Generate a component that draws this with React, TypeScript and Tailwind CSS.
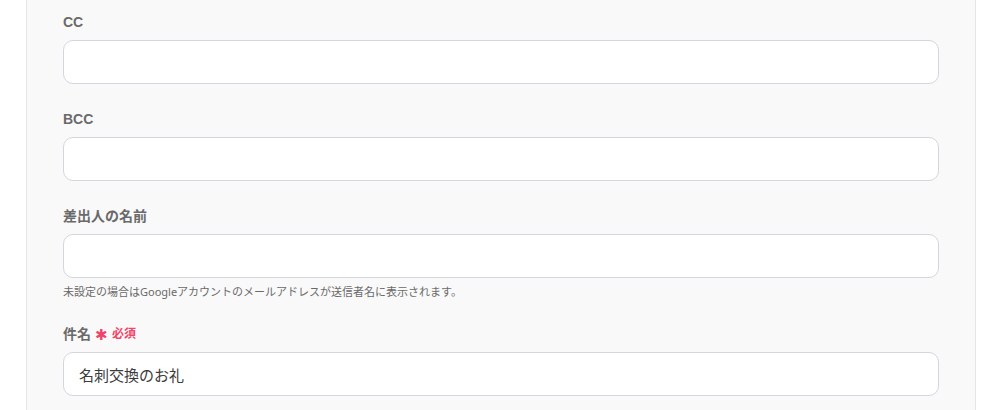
import React from 'react';

const font = { fontFamily: 'Roboto, "Noto Sans CJK JP", sans-serif' };
const labelFont = { fontFamily: '"Liberation Sans", "Noto Sans CJK JP", sans-serif' };
const helpFont = { fontFamily: '"Noto Sans", "Noto Sans CJK JP", sans-serif' };

type FieldProps = {
  label: string;
  required?: boolean;
  value?: string;
  help?: string;
};

const Field: React.FC<FieldProps> = ({ label, required, value = '', help }) => (
  <div className="flex flex-col">
    <div className="flex h-5 items-center gap-1 mb-2" style={labelFont}>
      <span className="text-[14px] font-bold text-[#6a6a6a]">{label}</span>
      {required && (
        <span className="flex items-center gap-1 text-[#f0456a]">
          <span className="text-[15px] leading-none">✱</span>
          <span className="text-[12px] font-bold">必須</span>
        </span>
      )}
    </div>
    <input
      readOnly
      value={value}
      className="h-11 w-full rounded-[10px] border border-[#d3d6dd] bg-white px-[15px] text-[15px] text-[#3b3b3b] outline-none"
    />
    {help && (
      <p className="mt-[7px] text-[11px] leading-[14px] text-[#6a6a6a]" style={helpFont}>
        {help}
      </p>
    )}
  </div>
);

export default function App() {
  return (
    <div className="h-[410px] w-[1006px] overflow-hidden bg-white" style={font}>
      <div className="ml-[26px] h-full w-[950px] border-x border-[#e6e6e6] bg-[#f9f9f9] px-9 pt-3">
        <div className="flex flex-col gap-[25px]">
          <Field label="CC" />
          <Field label="BCC" />
          <div className="flex flex-col gap-6">
            <Field
              label="差出人の名前"
              help="未設定の場合はGoogleアカウントのメールアドレスが送信者名に表示されます。"
            />
            <div className="pt-px">
              <Field label="件名" required value="名刺交換のお礼" />
            </div>
          </div>
        </div>
      </div>
    </div>
  );
}
